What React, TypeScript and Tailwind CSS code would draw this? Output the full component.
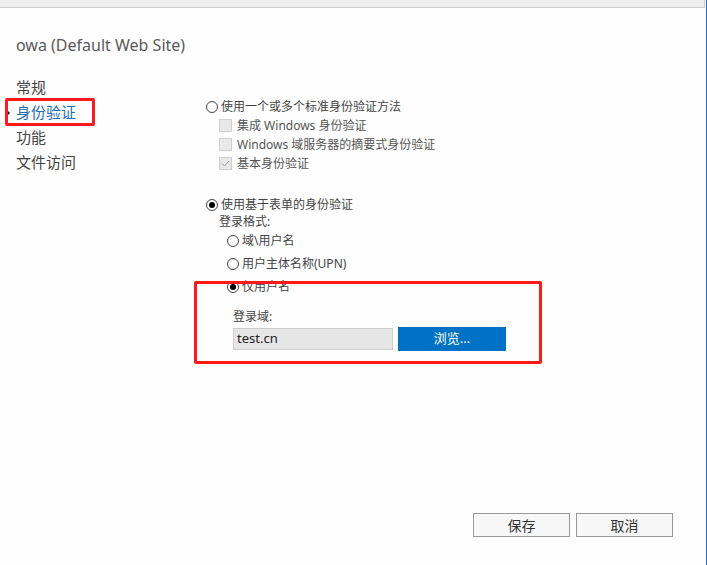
import React from "react";

const font = { fontFamily: '"Noto Sans", "Noto Sans CJK SC", sans-serif' };

function Radio({ checked }: { checked?: boolean }) {
  return (
    <span className="w-[12px] h-[12px] rounded-full border border-[#444] bg-white flex items-center justify-center shrink-0">
      {checked && <span className="w-[6px] h-[6px] rounded-full bg-black" />}
    </span>
  );
}

function Checkbox({ checked }: { checked?: boolean }) {
  return (
    <span className="w-[13px] h-[13px] border border-[#cfcfcf] bg-[#e9e9e9] flex items-center justify-center shrink-0">
      {checked && (
        <svg width="11" height="11" viewBox="0 0 11 11">
          <polyline points="2,5.5 4.5,8 9,3" fill="none" stroke="#9a9a9a" strokeWidth="1" />
        </svg>
      )}
    </span>
  );
}

export default function App() {
  return (
    <div
      className="relative w-[707px] h-[565px] bg-[#fefefe] border-r border-[#0a78d4] flex flex-col text-[#444]"
      style={font}
    >
      <div className="h-[8px] w-[705px] bg-[#efefef] border-b border-r border-[#cdcdcd]" />
      <div className="pl-[16px] mt-[25px] text-[16px] leading-[24px] text-[#5a5a5a]">owa (Default Web Site)</div>
      <div className="flex flex-1 mt-[18px]">
        <div className="w-[206px] shrink-0 text-[15px]">
          <div className="h-[25px] flex items-center pl-[16px]">常规</div>
          <div className="h-[25px] flex items-center pl-[6px] text-[#1f6db5]">
            <span className="w-0 h-0 border-y-[4px] border-y-transparent border-l-[4px] border-l-black mr-[6px]" />
            身份验证
          </div>
          <div className="h-[25px] flex items-center pl-[16px]">功能</div>
          <div className="h-[25px] flex items-center pl-[16px]">文件访问</div>
        </div>
        <div className="flex flex-col text-[12px] pt-[22px]">
          <div className="h-[19px] flex items-center gap-[3px]">
            <Radio />
            <span>使用一个或多个标准身份验证方法</span>
          </div>
          <div className="pl-[13px] flex flex-col text-[#555]">
            <div className="h-[19px] flex items-center gap-[5px]">
              <Checkbox />
              <span>集成 Windows 身份验证</span>
            </div>
            <div className="h-[19px] flex items-center gap-[5px]">
              <Checkbox />
              <span>Windows 域服务器的摘要式身份验证</span>
            </div>
            <div className="h-[19px] flex items-center gap-[5px]">
              <Checkbox checked />
              <span>基本身份验证</span>
            </div>
          </div>
          <div className="h-[19px] mt-[22px] flex items-center gap-[3px]">
            <Radio checked />
            <span>使用基于表单的身份验证</span>
          </div>
          <div className="pl-[13px] flex flex-col">
            <div className="h-[15px] flex items-center">登录格式:</div>
            <div className="pl-[8px] flex flex-col">
              <div className="h-[20px] mt-[2px] flex items-center gap-[3px]">
                <Radio />
                <span>域\用户名</span>
              </div>
              <div className="h-[20px] mt-[3px] flex items-center gap-[3px]">
                <Radio />
                <span>用户主体名称(UPN)</span>
              </div>
              <div className="h-[20px] mt-[3px] flex items-center gap-[3px]">
                <Radio checked />
                <span>仅用户名</span>
              </div>
              <div className="pl-[6px] flex flex-col">
                <div className="h-[18px] mt-[11px] flex items-center">登录域:</div>
                <div className="flex items-center mt-[1px]">
                  <div className="w-[160px] h-[22px] bg-[#e6e6e6] border border-[#cccccc] flex items-center pl-[3px] text-[13px] text-[#222]">
                    test.cn
                  </div>
                  <div className="ml-[5px] w-[108px] h-[24px] bg-[#0072c6] text-white flex items-center justify-center text-[13px]">
                    浏览...
                  </div>
                </div>
              </div>
            </div>
          </div>
        </div>
      </div>
      <div className="flex justify-end gap-[6px] pr-[33px] pb-[28px]">
        <div className="w-[97px] h-[24px] border border-[#999] bg-[#f7f7f7] flex items-center justify-center text-[14px] text-[#333]">保存</div>
        <div className="w-[97px] h-[24px] border border-[#999] bg-[#f7f7f7] flex items-center justify-center text-[14px] text-[#333]">取消</div>
      </div>
      <div className="absolute left-[5px] top-[98px] w-[90px] h-[28px] border-[3px] border-[#ff1a1a] rounded-[2px]" />
      <div className="absolute left-[194px] top-[281px] w-[348px] h-[83px] border-[3px] border-[#ff1a1a] rounded-[2px]" />
    </div>
  );
}
